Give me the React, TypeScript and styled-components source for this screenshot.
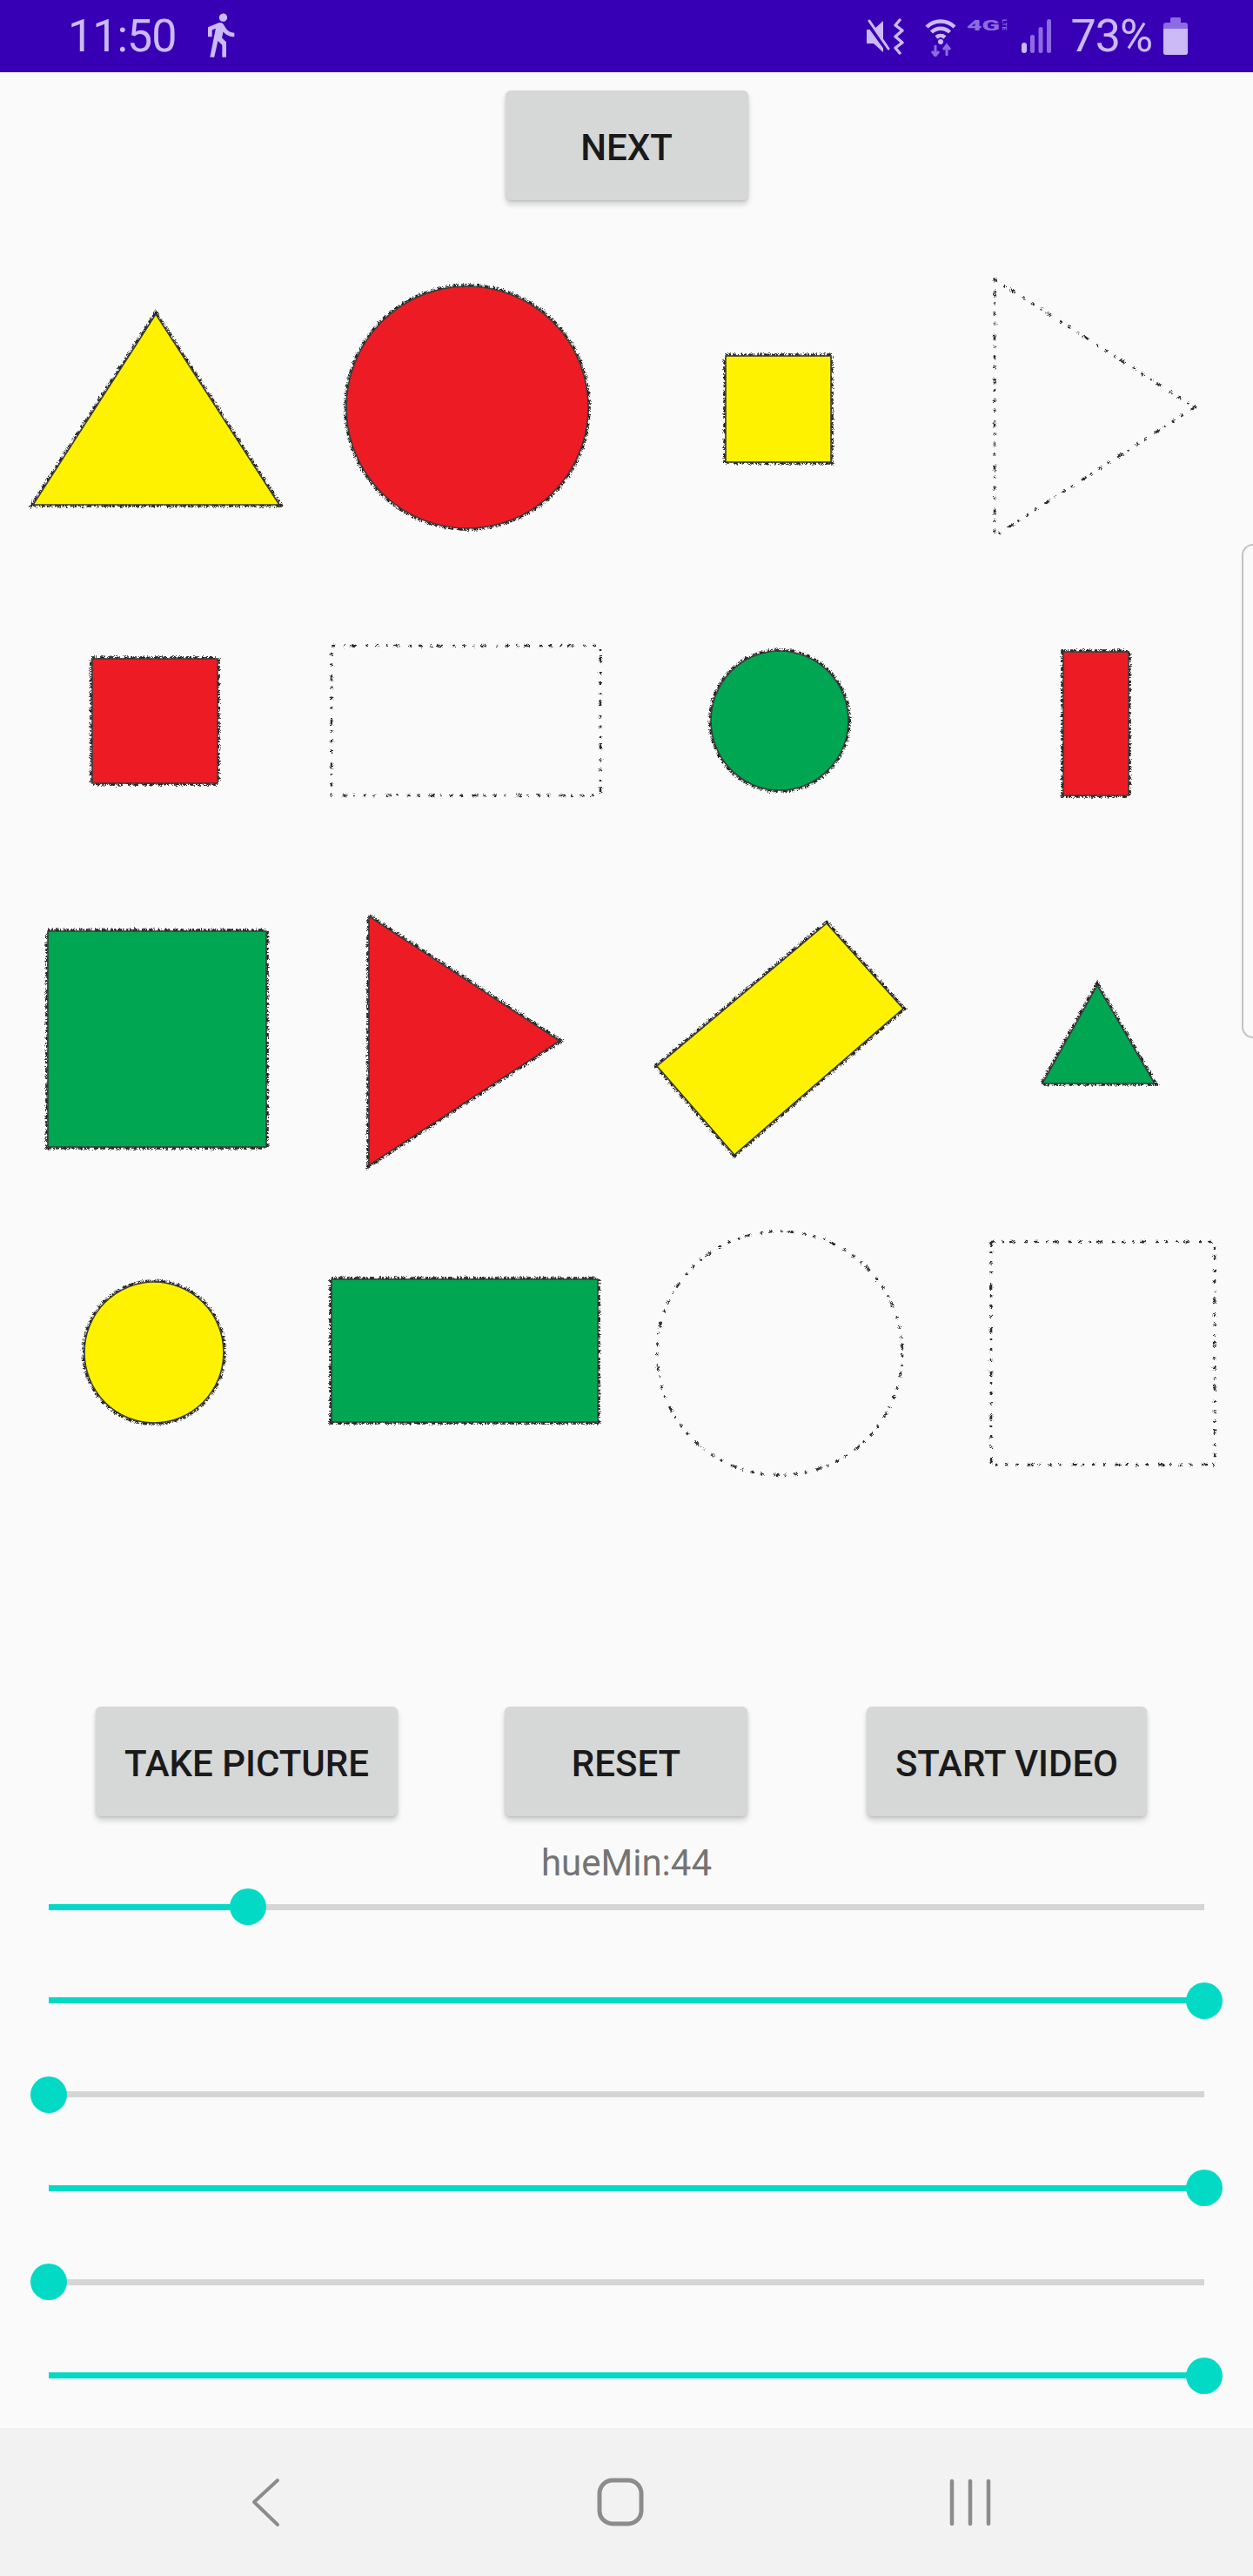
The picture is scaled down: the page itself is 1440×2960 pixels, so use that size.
import React from "react";
import styled, { createGlobalStyle } from "styled-components";
import { MdDirectionsWalk } from "react-icons/md";

const GlobalStyle = createGlobalStyle`
  html, body { margin: 0; padding: 0; background: #fafafa; }
  #root { width: 1440px; }
  * { box-sizing: border-box; }
`;

const BRIGHT = "#cbbaf6";
const DIM = "#8d6be2";
const TEAL = "#03dac5";
const YELLOW = "#fff200";
const RED = "#ed1c24";
const GREEN = "#00a651";

const Page = styled.div`
  width: 1440px;
  height: 2960px;
  display: flex;
  flex-direction: column;
  background: #fafafa;
  font-family: Roboto, "Liberation Sans", sans-serif;
  overflow: hidden;
`;

const StatusBar = styled.div`
  height: 83px;
  flex: none;
  background: #3800b4;
  display: flex;
  align-items: center;
  padding: 0 75px 0 78px;
  color: ${BRIGHT};
`;

const StatusText = styled.span<{ $ml?: number }>`
  font-family: Roboto, "Liberation Sans", sans-serif;
  font-size: 52px;
  line-height: 83px;
  letter-spacing: -1px;
  margin-left: ${(p) => p.$ml ?? 0}px;
`;

const Spacer = styled.div`
  flex: 1;
`;

const StatusIcon = styled.svg<{ $ml: number }>`
  display: block;
  flex: none;
  margin-left: ${(p) => p.$ml}px;
`;

const WalkIcon = styled(MdDirectionsWalk)`
  margin-left: 22px;
  flex: none;
  margin-top: -4px;
`;

const Main = styled.div`
  flex: 1;
  position: relative;
  display: flex;
  flex-direction: column;
`;

const NextRow = styled.div`
  display: flex;
  justify-content: center;
  padding-top: 21px;
`;

const AppButton = styled.button<{ $w: number; $ml?: number }>`
  width: ${(p) => p.$w}px;
  height: 126px;
  margin-left: ${(p) => p.$ml ?? 0}px;
  flex: none;
  border: none;
  border-radius: 6px;
  background: #d6d7d7;
  box-shadow: 0 5px 6px rgba(0, 0, 0, 0.16), 0 1px 3px rgba(0, 0, 0, 0.12);
  font-family: Roboto, "Liberation Sans", sans-serif;
  font-weight: 500;
  font-size: 42px;
  color: #1a1a1a;
  padding: 4px 0 0;
  display: flex;
  align-items: center;
  justify-content: center;
  white-space: nowrap;
`;

const Picture = styled.svg`
  display: block;
  margin-top: 9px;
  flex: none;
`;

const ButtonRow = styled.div`
  display: flex;
  padding-left: 110px;
  margin-top: 22px;
`;

const ValueLabel = styled.div`
  margin-top: 29px;
  text-align: center;
  font-family: Roboto, "Liberation Sans", sans-serif;
  font-size: 42px;
  line-height: 49px;
  color: #747474;
`;

const Sliders = styled.div`
  display: flex;
  flex-direction: column;
  gap: 65.8px;
  margin-top: 5px;
  padding: 0 56px;
`;

const SliderRow = styled.div`
  height: 42px;
  display: flex;
  align-items: center;
`;

const Track = styled.div`
  flex: 1;
  height: 7px;
  background: #d5d5d5;
  position: relative;
`;

const TrackFill = styled.div`
  position: absolute;
  left: 0;
  top: 0;
  bottom: 0;
  background: ${TEAL};
`;

const Thumb = styled.div`
  position: absolute;
  top: 50%;
  width: 42px;
  height: 42px;
  border-radius: 50%;
  background: ${TEAL};
  transform: translate(-50%, -50%);
`;

const EdgeHandle = styled.div`
  position: absolute;
  right: 0;
  top: 542px;
  width: 13px;
  height: 568px;
  border: 2px solid #c3c3c3;
  border-right: none;
  border-radius: 18px 0 0 18px;
`;

const NavBar = styled.div`
  height: 170px;
  flex: none;
  background: #f2f2f2;
  display: flex;
  align-items: center;
  justify-content: center;
  gap: 342px;
  padding-right: 14px;
`;

const NavIcon = styled.svg`
  display: block;
  width: 60px;
  height: 60px;
  flex: none;
`;

type Shape =
  | { k: "poly"; pts: string; fill?: string }
  | { k: "ell"; cx: number; cy: number; rx: number; ry: number; fill?: string }
  | { k: "rect"; x: number; y: number; w: number; h: number; fill?: string };

const SHAPES: Shape[] = [
  { k: "poly", pts: "179,362 321,581 38,581", fill: YELLOW },
  { k: "ell", cx: 537, cy: 469, rx: 139, ry: 139, fill: RED },
  { k: "rect", x: 834, y: 410, w: 121, h: 122, fill: YELLOW },
  { k: "poly", pts: "1143,322 1373,469 1143,617" },
  { k: "rect", x: 106, y: 758, w: 144, h: 143, fill: RED },
  { k: "rect", x: 381, y: 743, w: 309, h: 172 },
  { k: "ell", cx: 896, cy: 829, rx: 79, ry: 80, fill: GREEN },
  { k: "rect", x: 1222, y: 750, w: 75, h: 165, fill: RED },
  { k: "rect", x: 55, y: 1071, w: 251, h: 248, fill: GREEN },
  { k: "poly", pts: "424,1054 643,1197 424,1340", fill: RED },
  { k: "poly", pts: "950,1062 1038,1160 844,1328 755,1226", fill: YELLOW },
  { k: "poly", pts: "1261,1133 1327,1246 1198,1246", fill: GREEN },
  { k: "ell", cx: 177, cy: 1555, rx: 80, ry: 81, fill: YELLOW },
  { k: "rect", x: 381, y: 1471, w: 306, h: 164, fill: GREEN },
  { k: "ell", cx: 896, cy: 1556, rx: 141, ry: 140 },
  { k: "rect", x: 1139, y: 1428, w: 257, h: 256 },
];

function geom(s: Shape, props: React.SVGProps<SVGElement>) {
  const p = props as any;
  if (s.k === "poly") return <polygon points={s.pts} {...p} />;
  if (s.k === "ell") return <ellipse cx={s.cx} cy={s.cy} rx={s.rx} ry={s.ry} {...p} />;
  return <rect x={s.x} y={s.y} width={s.w} height={s.h} {...p} />;
}

function ShapesPicture() {
  return (
    <Picture width={1440} height={1700} viewBox="0 240 1440 1700">
      <defs>
        <filter id="rough" x="-10%" y="-10%" width="120%" height="120%">
          <feTurbulence type="fractalNoise" baseFrequency="1.1" numOctaves="1" seed="4" result="noise" />
          <feDisplacementMap in="SourceGraphic" in2="noise" scale="6" xChannelSelector="R" yChannelSelector="G" />
        </filter>
      </defs>
      {SHAPES.map((s, i) =>
        s.fill ? (
          <g key={i}>
            <g filter="url(#rough)">
              {geom(s, {
                fill: "none",
                stroke: "#222",
                strokeWidth: 5.5,
                strokeDasharray: "3 1 2 2 5 1 1 3",
              })}
            </g>
            {geom(s, { fill: s.fill, stroke: "#3b3b3b", strokeWidth: 1.6 })}
          </g>
        ) : (
          <g key={i} filter="url(#rough)">
            {geom(s, {
              fill: "none",
              stroke: "#2e2e2e",
              strokeWidth: 2.6,
              strokeDasharray: "4 9 2 6 7 11 3 8",
            })}
          </g>
        )
      )}
    </Picture>
  );
}

function Slider({ value, max }: { value: number; max: number }) {
  const pct = (value / max) * 100;
  return (
    <SliderRow>
      <Track>
        <TrackFill style={{ width: `${pct}%` }} />
        <Thumb style={{ left: `${pct}%` }} />
      </Track>
    </SliderRow>
  );
}

function StatusIcons() {
  return (
    <>
      {/* vibrate/mute */}
      <StatusIcon $ml={0} width={43} height={42} viewBox="0 0 43 42">
        <polygon points="0,13 8,13 19,3 19,39 8,29 0,29" fill={BRIGHT} />
        <line x1="1" y1="5" x2="24" y2="37" stroke="#3800b4" strokeWidth="5" />
        <line x1="3" y1="3" x2="25" y2="35" stroke={BRIGHT} strokeWidth="3" strokeLinecap="round" />
        <polyline
          points="38,2 33,8 41,14 33,21 41,28 33,34 38,40"
          fill="none"
          stroke={BRIGHT}
          strokeWidth="3.4"
          strokeLinejoin="round"
          strokeLinecap="round"
        />
      </StatusIcon>
      {/* wifi with arrows */}
      <StatusIcon $ml={24} width={36} height={46} viewBox="0 0 36 46">
        <path d="M2 12 A 23 23 0 0 1 34 12" fill="none" stroke={BRIGHT} strokeWidth="4.5" />
        <path d="M7.5 18 A 15 15 0 0 1 28.5 18" fill="none" stroke={BRIGHT} strokeWidth="4.5" />
        <path d="M13 24 A 7.5 7.5 0 0 1 23 24" fill="none" stroke={BRIGHT} strokeWidth="4.5" />
        <circle cx="18" cy="29" r="3" fill={BRIGHT} />
        <path d="M12 33 V45 M8 40 L12 45 L16 40" fill="none" stroke={DIM} strokeWidth="3" />
        <path d="M25 45 V33 M21 38 L25 33 L29 38" fill="none" stroke={DIM} strokeWidth="3" />
      </StatusIcon>
      {/* 4G LTE */}
      <StatusIcon $ml={12} width={53} height={44} viewBox="0 0 53 44">
        <text
          x="0"
          y="15"
          textLength="38"
          lengthAdjust="spacingAndGlyphs"
          fontFamily="Roboto, 'Liberation Sans', sans-serif"
          fontWeight="900"
          fontSize="17"
          fill={DIM}
        >
          4G
        </text>
        <text
          x="0"
          y="0"
          textLength="13"
          lengthAdjust="spacingAndGlyphs"
          transform="translate(41 2) rotate(90)"
          fontFamily="Roboto, 'Liberation Sans', sans-serif"
          fontWeight="700"
          fontSize="8"
          fill={DIM}
        >
          LTE
        </text>
      </StatusIcon>
      {/* signal */}
      <StatusIcon $ml={10} width={36} height={42} viewBox="0 0 36 42">
        <rect x="0" y="28" width="6" height="12" rx="3" fill={BRIGHT} />
        <rect x="10" y="19" width="5" height="21" rx="2.5" fill={DIM} />
        <rect x="19.5" y="10" width="5" height="30" rx="2.5" fill={DIM} />
        <rect x="29" y="1" width="5" height="39" rx="2.5" fill={DIM} />
      </StatusIcon>
      <StatusText $ml={20}>73%</StatusText>
      {/* battery */}
      <StatusIcon $ml={13} width={28} height={44} viewBox="0 0 28 44">
        <rect x="8" y="0" width="12" height="8" rx="1.5" fill={DIM} />
        <rect x="0" y="6" width="28" height="37" rx="3" fill={DIM} />
        <rect x="0" y="13" width="28" height="30" rx="3" fill={BRIGHT} />
        <rect x="0" y="13" width="28" height="4" fill={BRIGHT} />
      </StatusIcon>
    </>
  );
}

export default function App() {
  const values = [44, 255, 0, 255, 0, 255];
  return (
    <>
      <GlobalStyle />
      <Page>
        <StatusBar>
          <StatusText>11:50</StatusText>
          <WalkIcon size={56} color={BRIGHT} />
          <Spacer />
          <StatusIcons />
        </StatusBar>
        <Main>
          <NextRow>
            <AppButton $w={279}>NEXT</AppButton>
          </NextRow>
          <ShapesPicture />
          <ButtonRow>
            <AppButton $w={347}>TAKE PICTURE</AppButton>
            <AppButton $w={279} $ml={123}>RESET</AppButton>
            <AppButton $w={322} $ml={137}>START VIDEO</AppButton>
          </ButtonRow>
          <ValueLabel>hueMin:44</ValueLabel>
          <Sliders>
            {values.map((v, i) => (
              <Slider key={i} value={v} max={255} />
            ))}
          </Sliders>
          <EdgeHandle />
        </Main>
        <NavBar>
          <NavIcon viewBox="0 0 60 60">
            <polyline
              points="38,5 11,30 38,56"
              fill="none"
              stroke="#8c8c8c"
              strokeWidth="4"
              strokeLinecap="round"
              strokeLinejoin="round"
            />
          </NavIcon>
          <NavIcon viewBox="0 0 60 60">
            <rect x="6" y="5" width="48" height="50" rx="15" fill="none" stroke="#8c8c8c" strokeWidth="5" />
          </NavIcon>
          <NavIcon viewBox="0 0 60 60">
            <path d="M9 6 V55 M30 6 V55 M51 6 V55" stroke="#8c8c8c" strokeWidth="4.5" strokeLinecap="round" />
          </NavIcon>
        </NavBar>
      </Page>
    </>
  );
}
